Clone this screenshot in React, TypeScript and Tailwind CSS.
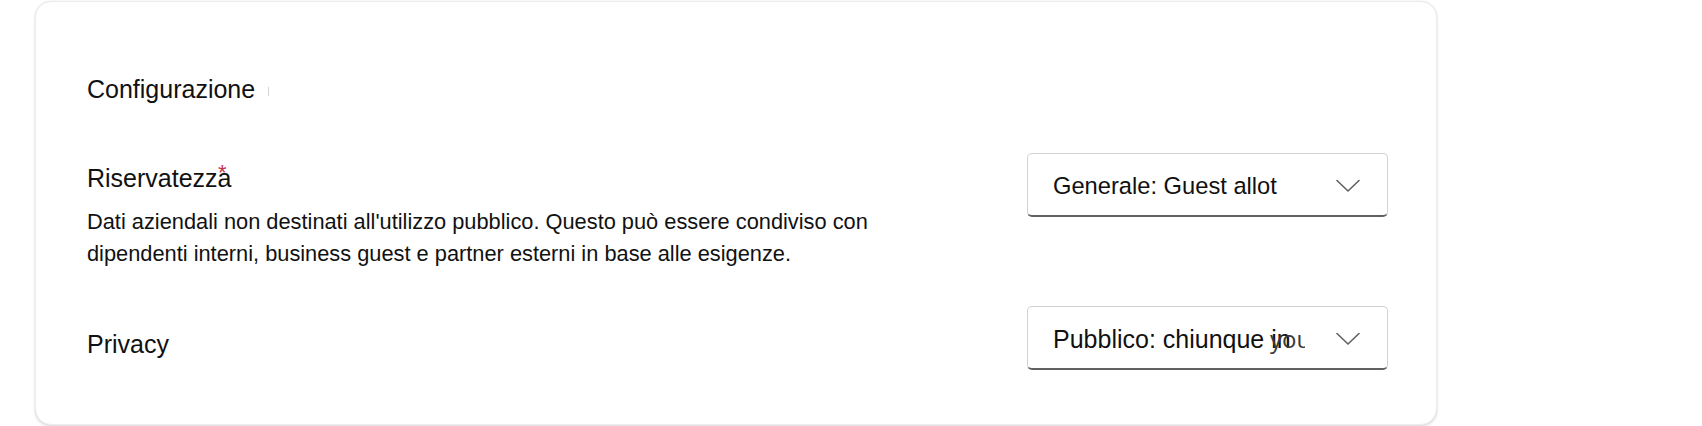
import { ReactNode } from 'react';

function Chevron() {
  return (
    <svg width="24" height="14" viewBox="0 0 24 14" fill="none" className="mt-[3px] shrink-0">
      <path d="M1 1.5 L12 12 L23 1.5" stroke="#616161" strokeWidth="1.6" strokeLinecap="round" strokeLinejoin="round" />
    </svg>
  );
}

function Dropdown({ children, textClass }: { children: ReactNode; textClass: string }) {
  return (
    <div className="flex h-[64px] w-[361px] shrink-0 items-center justify-between rounded-[5px] border border-[#d1d1d1] border-b-[#616161] border-b-2 bg-white pl-[25px] pr-[27px]">
      <div className={`relative w-[252px] overflow-hidden whitespace-nowrap text-[#111] ${textClass}`}>{children}</div>
      <Chevron />
    </div>
  );
}

export default function App() {
  return (
    <div className="min-h-screen bg-white font-['Liberation_Sans',Arial,sans-serif]">
      <div className="ml-[35px] mt-px h-[424px] w-[1402px] rounded-[16px] border border-[#ececec] bg-white pl-[51px] pr-[48px] pt-[72px] shadow-[0_0_2px_rgba(0,0,0,0.10),0_2px_3px_rgba(0,0,0,0.10)]">
        {/* Section title */}
        <div className="flex items-center text-[25px] leading-[30px] text-[#111]">
          <span>Configurazione</span>
          <span className="ml-[13px] mt-[4px] h-[9px] w-px bg-[#d4d4d4]"></span>
        </div>

        {/* Riservatezza */}
        <div className="mt-[49px] flex items-start justify-between">
          <div className="pt-[10px]">
            <div className="relative inline-block text-[25px] leading-[30px] text-[#111]">
              Riservatezza
              <span className="absolute right-[5px] top-[-1px] text-[22px] leading-[22px] text-[#c4314b]">*</span>
            </div>
            <p className="mt-[12px] w-[800px] text-[21.8px] leading-[32px] text-[#111]">
              Dati aziendali non destinati all'utilizzo pubblico. Questo può essere condiviso con dipendenti interni, business guest e partner esterni in base alle esigenze.
            </p>
          </div>
          <Dropdown textClass="text-[23.7px] leading-[30px] mt-[3px]">Generale: Guest allot</Dropdown>
        </div>

        {/* Privacy */}
        <div className="mt-[36px] flex items-start justify-between">
          <div className="pt-[23px] text-[25px] leading-[30px] text-[#111]">Privacy</div>
          <Dropdown textClass="text-[25px] leading-[30px] mt-[3px]">
            Pubblico: chiunque in
            <span className="absolute left-[217px] top-0 font-['Open_Sans',sans-serif] text-[24px] text-[#3a3a3a]">you</span>
          </Dropdown>
        </div>
      </div>
    </div>
  );
}
